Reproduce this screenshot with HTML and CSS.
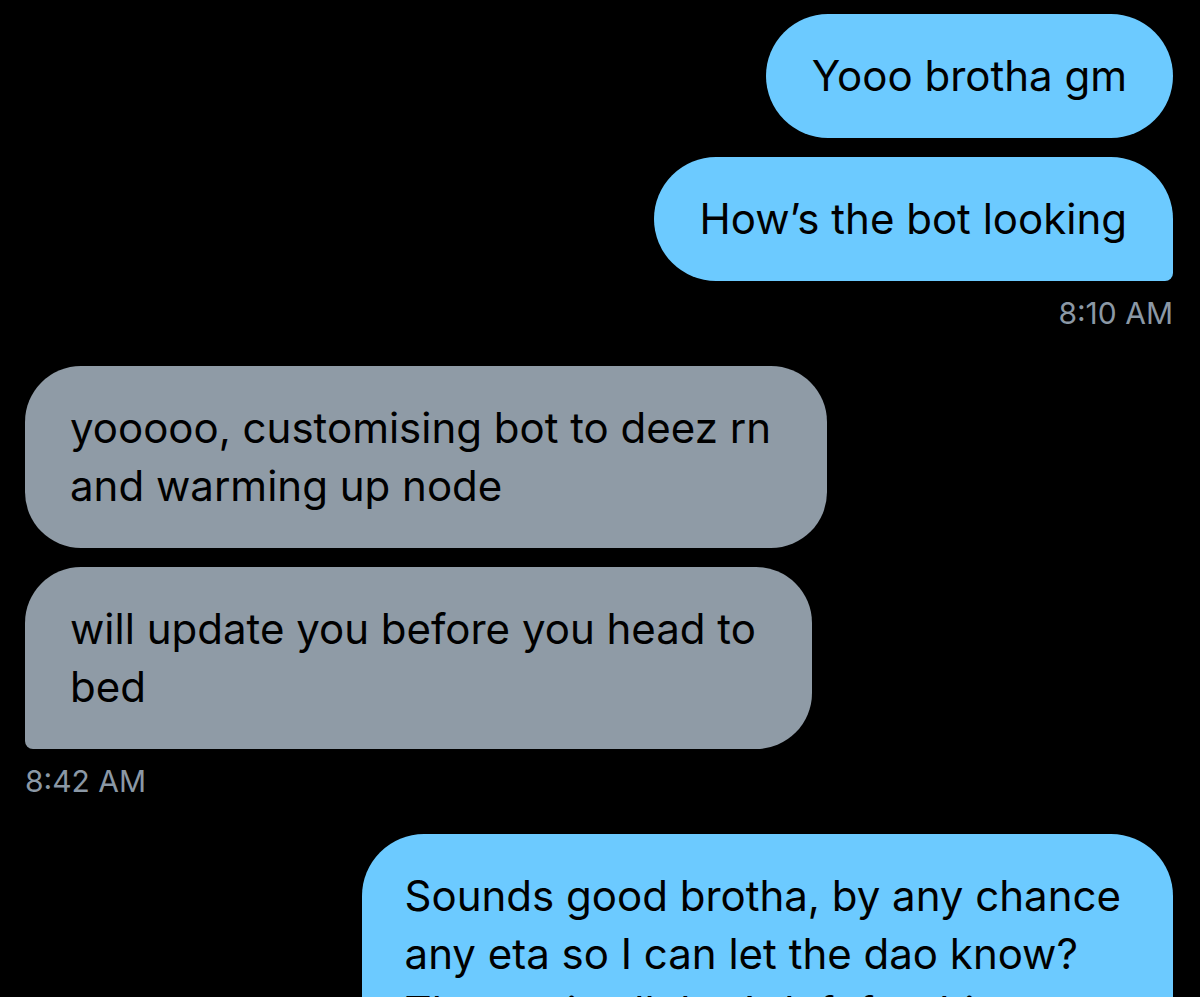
FILE: index.html
```html
<!DOCTYPE html>
<html>
  <head>
    <meta charset="utf-8">
    <title>Messages</title>
    <link rel="stylesheet" href="styles.css">
  </head>
  <body>
    <div class="thread">
      <div class="group sent">
        <div class="bubble">Yooo brotha gm</div>
        <div class="bubble last">How’s the bot looking</div>
        <div class="time">8:10 AM</div>
      </div>

      <div class="group received">
        <div class="bubble">yooooo, customising bot to deez rn<br>and warming up node</div>
        <div class="bubble last">will update you before you head to<br>bed</div>
        <div class="time">8:42 AM</div>
      </div>

      <div class="group sent">
        <div class="bubble last">Sounds good brotha, by any chance<br>any eta so I can let the dao know?<br>The eta is all that’s left for this</div>
      </div>
    </div>
  </body>
</html>
```
FILE: styles.css
```css
html,
body {
  margin: 0;
  height: 100%;
  background-color: #000;
  overflow: hidden;
}

.thread {
  display: flex;
  flex-direction: column;
  padding: 14px 27px 0 25px;
  font-family: Inter, "Noto Sans", sans-serif;
}

.group {
  display: flex;
  flex-direction: column;
  gap: 19px;
}

.group + .group {
  margin-top: 35px;
}

.sent {
  align-items: flex-end;
}

.received {
  align-items: flex-start;
}

.bubble {
  padding: 33px 46px 33px 46px;
  font-size: 42px;
  line-height: 58px;
  color: #000;
  border-radius: 62px;
  white-space: nowrap;
}

.sent .bubble {
  background-color: #6ccaff;
}

.received .bubble {
  padding-left: 45px;
  padding-right: 56px;
  background-color: #8f9ba6;
  border-radius: 56px;
}

.sent .bubble.last {
  border-bottom-right-radius: 8px;
}

.group:last-child .bubble.last {
  padding-left: 43px;
  padding-right: 52px;
}

.received .bubble.last {
  border-bottom-left-radius: 8px;
}

.time {
  margin-top: -5px;
  font-size: 30px;
  line-height: 36px;
  color: #8b98a5;
}
```
